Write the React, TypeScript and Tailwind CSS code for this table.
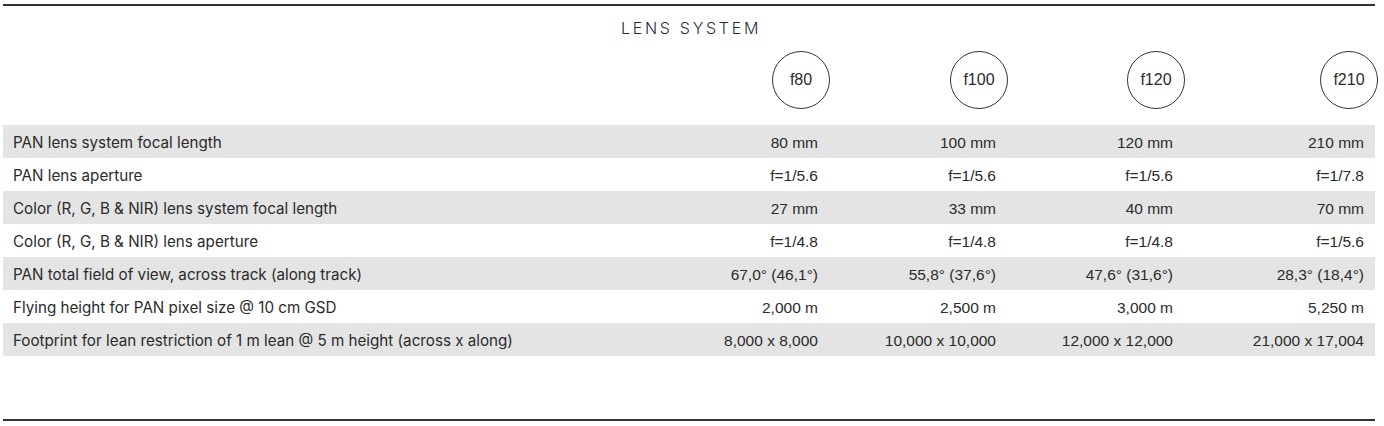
const lenses = ["f80", "f100", "f120", "f210"];

const rows: { label: string; values: string[] }[] = [
  { label: "PAN lens system focal length", values: ["80 mm", "100 mm", "120 mm", "210 mm"] },
  { label: "PAN lens aperture", values: ["f=1/5.6", "f=1/5.6", "f=1/5.6", "f=1/7.8"] },
  { label: "Color (R, G, B & NIR) lens system focal length", values: ["27 mm", "33 mm", "40 mm", "70 mm"] },
  { label: "Color (R, G, B & NIR) lens aperture", values: ["f=1/4.8", "f=1/4.8", "f=1/4.8", "f=1/5.6"] },
  {
    label: "PAN total field of view, across track (along track)",
    values: ["67,0° (46,1°)", "55,8° (37,6°)", "47,6° (31,6°)", "28,3° (18,4°)"],
  },
  { label: "Flying height for PAN pixel size @ 10 cm GSD", values: ["2,000 m", "2,500 m", "3,000 m", "5,250 m"] },
  {
    label: "Footprint for lean restriction of 1 m lean @ 5 m height (across x along)",
    values: ["8,000 x 8,000", "10,000 x 10,000", "12,000 x 12,000", "21,000 x 17,004"],
  },
];

const grid = "grid grid-cols-[1fr_178px_178px_177px_191px]";

export default function App() {
  return (
    <div className="min-h-[426px] bg-white pt-1 pl-[3px] text-[#2b2b2b]">
      <div className="w-[1372px]">
        <div className="h-[2px] bg-[#333]" />
        <h2 className="mt-[12px] pl-[4px] text-center font-['Inter',sans-serif] text-[16px] font-light leading-[20px] tracking-[0.17em] text-[#2a2a3a]">
          LENS SYSTEM
        </h2>

        <div className={`${grid} mt-[13px] mb-[16px]`}>
          <div />
          {lenses.map((l, i) => (
            <div key={l} className={`flex justify-end ${i === 3 ? "-mr-[3px]" : "-mr-px"}`}>
              <div className="flex h-[58px] w-[58px] items-center justify-center rounded-full border border-[#333] font-['Liberation_Sans',sans-serif] text-[16px]">
                {l}
              </div>
            </div>
          ))}
        </div>

        <div>
          {rows.map((r, idx) => (
            <div
              key={r.label}
              className={`${grid} h-[33px] items-center pt-[3px] ${idx % 2 === 0 ? "bg-[#e4e4e4]" : "bg-white"}`}
            >
              <div className="pl-[10px] font-['Inter',sans-serif] text-[15.2px]">{r.label}</div>
              {r.values.map((v, i) => (
                <div key={i} className="pr-[11px] text-right font-['Liberation_Sans',sans-serif] text-[15.5px]">
                  {v}
                </div>
              ))}
            </div>
          ))}
        </div>

        <div className="mt-[63px] h-[2px] bg-[#333]" />
      </div>
    </div>
  );
}
